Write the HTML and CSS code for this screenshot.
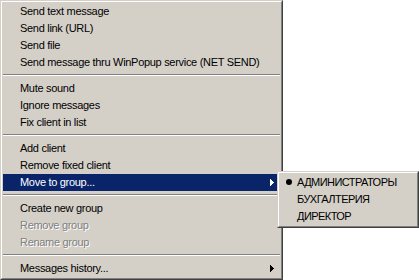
FILE: index.html
```html
<!DOCTYPE html>
<html lang="en">
<head>
  <meta charset="UTF-8" />
  <title>Client menu</title>
  <link rel="stylesheet" href="styles.css">
</head>
<body>
  <div class="screen">

    <!-- Main context menu -->
    <div class="menu main-menu">
      <div class="menu-frame">
        <div class="item"><span class="check"></span>Send text message</div>
        <div class="item"><span class="check"></span>Send link (URL)</div>
        <div class="item"><span class="check"></span>Send file</div>
        <div class="item"><span class="check"></span>Send message thru WinPopup service (NET SEND)</div>
        <div class="sep"></div>
        <div class="item"><span class="check"></span>Mute sound</div>
        <div class="item"><span class="check"></span>Ignore messages</div>
        <div class="item"><span class="check"></span>Fix client in list</div>
        <div class="sep"></div>
        <div class="item"><span class="check"></span>Add client</div>
        <div class="item"><span class="check"></span>Remove fixed client</div>
        <div class="item active"><span class="check"></span>Move to group...
          <svg class="arrow" width="4" height="7" viewBox="0 0 4 7"><path d="M0 0h1v7H0z M1 1h1v5H1z M2 2h1v3H2z M3 3h1v1H3z"/></svg>
        </div>
        <div class="sep"></div>
        <div class="item"><span class="check"></span>Create new group</div>
        <div class="item disabled"><span class="check"></span>Remove group</div>
        <div class="item disabled"><span class="check"></span>Rename group</div>
        <div class="sep"></div>
        <div class="item"><span class="check"></span>Messages history...
          <svg class="arrow" width="4" height="7" viewBox="0 0 4 7"><path d="M0 0h1v7H0z M1 1h1v5H1z M2 2h1v3H2z M3 3h1v1H3z"/></svg>
        </div>
      </div>
    </div>

    <!-- Group submenu -->
    <div class="menu sub-menu">
      <div class="menu-frame">
        <div class="item"><span class="check"><span class="bullet"></span></span>АДМИНИСТРАТОРЫ</div>
        <div class="item"><span class="check"></span>БУХГАЛТЕРИЯ</div>
        <div class="item"><span class="check"></span>ДИРЕКТОР</div>
      </div>
    </div>

  </div>
</body>
</html>
```

FILE: styles.css
```css
*, *::before, *::after {
  box-sizing: border-box;
}

body {
  margin: 0;
  background: #fff;
  font-family: "Liberation Sans", Arial, sans-serif;
  font-size: 11px;
  letter-spacing: -0.3px;
  color: #000;
}

.screen {
  position: relative;
  width: 419px;
  height: 280px;
  overflow: hidden;
}

.menu {
  background: #d4d0c8;
  border: 1px solid;
  border-color: #d4d0c8 #404040 #404040 #d4d0c8;
}

.menu-frame {
  border: 1px solid;
  border-color: #fff #808080 #808080 #fff;
  padding: 1px;
}

.main-menu {
  width: 283px;
}

.sub-menu {
  position: absolute;
  left: 277px;
  top: 171px;
  width: 142px;
  letter-spacing: -0.55px;
}

.item {
  display: flex;
  align-items: center;
  height: 17px;
  padding: 0 6px 1px 0;
  white-space: nowrap;
}

.item.active {
  background: #0a246a;
  color: #fff;
}

.item.disabled {
  color: #808080;
  text-shadow: 1px 1px 0 #fff;
}

.check {
  flex: none;
  width: 17px;
  display: flex;
  justify-content: center;
}

.bullet {
  width: 6px;
  height: 6px;
  border-radius: 50%;
  background: #000;
}

.arrow {
  margin-left: auto;
  fill: currentColor;
  shape-rendering: crispEdges;
}

.sep {
  height: 2px;
  margin: 3px 0 4px;
  border-top: 1px solid #808080;
  border-bottom: 1px solid #fff;
}
```
